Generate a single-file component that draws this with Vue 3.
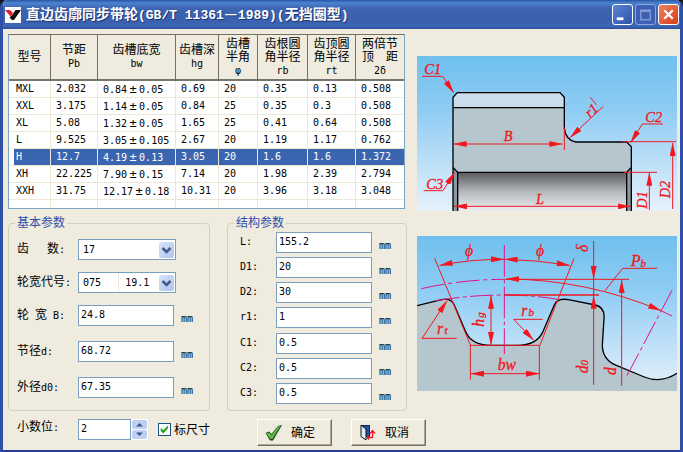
<script setup>
import { h, ref } from 'vue'

// Splits mixed text so that Han characters take two Latin cells.
const Mix = (props) =>
  (props.text.match(/[\u3400-\u9fff]+|±|—|[^\u3400-\u9fff±—]+/g) || []).map((run) => {
    if (run === '±' || run === '—') return h('span', { class: 'wide' }, run)
    return h('span', { class: /[\u3400-\u9fff]/.test(run) ? 'han' : 'latin' }, run)
  })
Mix.props = ['text']

const title = '直边齿廓同步带轮(GB/T 11361—1989)(无挡圈型)'
const columns = [
  ['型号'],
  ['节距', 'Pb'],
  ['齿槽底宽', 'bw'],
  ['齿槽深', 'hg'],
  ['齿槽', '半角', 'φ'],
  ['齿根圆', '角半径', 'rb'],
  ['齿顶圆', '角半径', 'rt'],
  ['两倍节', '顶  距', '2δ'],
]
const rows = [
  ['MXL', '2.032', '0.84±0.05', '0.69', '20', '0.35', '0.13', '0.508'],
  ['XXL', '3.175', '1.14±0.05', '0.84', '25', '0.35', '0.3', '0.508'],
  ['XL', '5.08', '1.32±0.05', '1.65', '25', '0.41', '0.64', '0.508'],
  ['L', '9.525', '3.05±0.105', '2.67', '20', '1.19', '1.17', '0.762'],
  ['H', '12.7', '4.19±0.13', '3.05', '20', '1.6', '1.6', '1.372'],
  ['XH', '22.225', '7.90±0.15', '7.14', '20', '1.98', '2.39', '2.794'],
  ['XXH', '31.75', '12.17±0.18', '10.31', '20', '3.96', '3.18', '3.048'],
]
const selected = ref(4)
const teeth = ref('17')
const code = ref('075')
const basics = ref([
  { id: 'width', label: '轮 宽 B:', value: '24.8' },
  { id: 'pitch', label: '节径d:', value: '68.72' },
  { id: 'outer', label: '外径d0:', value: '67.35' },
])
const structure = ref([
  { id: 'L', value: '155.2' },
  { id: 'D1', value: '20' },
  { id: 'D2', value: '30' },
  { id: 'r1', value: '1' },
  { id: 'C1', value: '0.5' },
  { id: 'C2', value: '0.5' },
  { id: 'C3', value: '0.5' },
])
const decimals = ref(2)
const dimension = ref(true)

// Leaders and dimension lines with an arrow at their end, then with one at both ends.
const sectionArrows = [
  'M36 79H98L131 128',
  'M41 422H99L134 367',
  'M759 222H697L662 278',
  'M580 169L480 263',
  'M718 480V368',
  'M788 477V279',
]
const sectionSpans = ['M131 282H457', 'M133 469H662']
const toothArrows = [
  'M548 33V147',
  'M548 465V197',
  'M632 467V150',
  'M395 268H308L368 331',
  'M137 325H33L108 212',
]
const toothSpans = [
  'M86 106Q175 88 279 88',
  'M281 88Q380 90 476 106',
  'M240 197V345',
  'M180 431H384',
  'M286 147Q525 148 750 242',
]
</script>

<template>
  <main class="window">
    <header class="titlebar">
      <svg class="logo" viewBox="0 0 16 16" aria-hidden="true">
        <rect width="16" height="16" fill="#fff" />
        <path d="M0 3H5L8 6L5.500 9.500Z" fill="#e3202a" />
        <path d="M10.500 3H16L9 13H7L4.500 10.500L7.500 7.500Z" fill="#111" />
      </svg>
      <h1><Mix :text="title" /></h1>
      <div class="controls">
        <button type="button" class="ctl" aria-label="最小化">
          <svg viewBox="0 0 20 20"><rect x="4" y="13" width="7" height="3" fill="#fff" /></svg>
        </button>
        <button type="button" class="ctl off" disabled aria-label="最大化">
          <svg viewBox="0 0 20 20"><path d="M5 5.500H15V15.500H5Z M5 6.500H15" fill="none" stroke="#8199d6" stroke-width="1.500" /></svg>
        </button>
        <button type="button" class="ctl close" aria-label="关闭">
          <svg viewBox="0 0 20 20"><path d="M5.500 5.500L14.500 14.500M14.500 5.500L5.500 14.500" stroke="#fff" stroke-width="2.400" /></svg>
        </button>
      </div>
    </header>

    <div class="content">
      <section class="left">
        <div class="grid-box">
          <table>
            <thead>
              <tr>
                <th v-for="(lines, c) in columns" :key="c" scope="col">
                  <div v-for="line in lines" :key="line" class="hl"><Mix :text="line" /></div>
                </th>
              </tr>
            </thead>
            <tbody>
              <tr v-for="(row, r) in rows" :key="r" :class="{ on: r === selected }" @click="selected = r">
                <td v-for="(cell, c) in row" :key="c"><Mix :text="cell" /></td>
              </tr>
              <tr class="rest"><td v-for="c in 8" :key="c"></td></tr>
            </tbody>
          </table>
        </div>

        <div class="groups">
          <fieldset class="basic">
            <legend><Mix text="基本参数" /></legend>
            <div class="row combo-row">
              <label for="teeth"><Mix text="齿   数:" /></label>
              <span class="combo">
                <select id="teeth" v-model="teeth"><option>17</option><option>18</option></select>
                <span class="drop"><svg viewBox="0 0 15 16"><path d="M3.500 6L7.500 10L11.500 6" /></svg></span>
              </span>
            </div>
            <div class="row combo-row">
              <label for="code"><Mix text="轮宽代号:" /></label>
              <span class="combo split">
                <select id="code" v-model="code"><option value="075">075&nbsp;&nbsp;&nbsp;&nbsp;19.1</option></select>
                <span class="drop"><svg viewBox="0 0 15 16"><path d="M3.500 6L7.500 10L11.500 6" /></svg></span>
              </span>
            </div>
            <div v-for="f in basics" :key="f.id" class="row value-row">
              <label :for="f.id"><Mix :text="f.label" /></label>
              <input :id="f.id" v-model="f.value" type="text" />
              <span class="unit">mm</span>
            </div>
          </fieldset>

          <fieldset class="struct">
            <legend><Mix text="结构参数" /></legend>
            <div v-for="f in structure" :key="f.id" class="row">
              <label :for="f.id"><Mix :text="f.id + ':'" /></label>
              <input :id="f.id" v-model="f.value" type="text" />
              <span class="unit">mm</span>
            </div>
          </fieldset>
        </div>
      </section>

      <section class="drawings">
        <svg class="drawing" viewBox="21 18 780 465" role="img" aria-label="带轮结构">
          <defs>
            <linearGradient id="sky" x1="0" y1="0" x2="0" y2="1">
              <stop offset="0" stop-color="#6fc0ef" /><stop offset="0.350" stop-color="#8fccf3" /><stop offset="1" stop-color="#e6f1fb" />
            </linearGradient>
            <linearGradient id="bore" x1="0" y1="0" x2="0" y2="1">
              <stop offset="0" stop-color="#59595d" /><stop offset="0.500" stop-color="#b4b8bd" /><stop offset="1" stop-color="#eceef0" />
            </linearGradient>
            <marker id="tip" viewBox="0 0 40 18" refX="39" refY="9" markerWidth="40" markerHeight="18" markerUnits="userSpaceOnUse" orient="auto-start-reverse">
              <path d="M0 0L40 9L0 18Z" fill="#f01820" />
            </marker>
          </defs>
          <rect x="21" y="18" width="780" height="465" fill="url(#sky)" />
          <path d="M129 142L142 128H450L463 142V235Q467 270 497 276H650L664 290V352L650 367H142L129 352Z" fill="#b5c6ce" />
          <path d="M129 173V142L142 128H450L463 142V173Z" fill="#cbdcec" />
          <rect x="129" y="367" width="535" height="116" fill="url(#bore)" />
          <path d="M129 352V483H143V367ZM664 352V483H650V367Z" fill="#8d979f" />
          <path class="ink" d="M129 483V142L142 128H450L463 142V235Q467 270 497 276H650L664 290V483M129 173H463M129 352L143 367V483M664 352L650 367V483M143 367H650" />
          <g class="red">
            <path v-for="d in sectionArrows" :key="d" :d="d" marker-end="url(#tip)" />
            <path v-for="d in sectionSpans" :key="d" :d="d" marker-start="url(#tip)" marker-end="url(#tip)" />
            <path d="M463 232V300M637 275H798M642 367H741M541 142L559 164" />
          </g>
          <g class="tag">
            <text x="43" y="73">C1</text><text x="49" y="418">C3</text><text x="706" y="217">C2</text>
            <text x="281" y="273">B</text><text x="378" y="461">L</text>
            <text transform="translate(540 205) rotate(-43)">r1</text>
            <text transform="translate(710 476) rotate(-90)">D1</text>
            <text transform="translate(780 445) rotate(-90)">D2</text>
          </g>
        </svg>

        <svg class="drawing" viewBox="18 18 780 465" role="img" aria-label="齿形参数">
          <rect x="18" y="18" width="780" height="465" fill="url(#sky)" />
          <path d="M18 227L92 209Q122 202 132 230L163 303Q180 346 240 346H320Q375 346 395 307L430 225Q439 203 472 209L553 225Q582 232 579 265L574 345Q574 390 618 407L700 441Q750 461 798 430V483H18Z" fill="#b5c6ce" />
          <path class="ink" d="M18 227L92 209Q122 202 132 230L163 303Q180 346 240 346H320Q375 346 395 307L430 225Q439 203 472 209L553 225Q582 232 579 265L574 345Q574 390 618 407L700 441Q750 461 798 430" />
          <g class="center">
            <path d="M280 45V372" stroke-dasharray="95 10 10 10" />
            <path d="M31 176Q155 148 280 148" stroke-dasharray="70 12 12 12" />
            <path d="M750 242L783 258" />
            <path d="M76 212Q175 195 280 195Q365 195 440 208" stroke-dasharray="70 10 12 10" />
            <path d="M783 181L648 437" stroke-dasharray="75 10 12 10" />
          </g>
          <g class="red">
            <path d="M71 85L178 345M489 85L387 345M178 345V449M385 345V449M178 346H385M280 148H654M582 182L635 115H738M548 147V197" />
            <path class="thick" d="M280 195H564" />
            <path v-for="d in toothArrows" :key="d" :d="d" marker-end="url(#tip)" />
            <path v-for="d in toothSpans" :key="d" :d="d" marker-start="url(#tip)" marker-end="url(#tip)" />
          </g>
          <g class="tag bold">
            <text x="162" y="79">ϕ</text><text x="375" y="79">ϕ</text>
            <text x="660" y="107">P<tspan class="sub" dy="3">b</tspan></text>
            <text x="331" y="257">r<tspan class="sub" dx="3">b</tspan></text>
            <text x="78" y="313">r<tspan class="sub" dx="4">t</tspan></text>
            <text x="260" y="419">bw</text>
            <text transform="translate(220 290) rotate(-90)">h<tspan class="sub" dx="3">g</tspan></text>
            <text transform="translate(531 66) rotate(-90)">δ</text>
            <text transform="translate(530 430) rotate(-90)">d<tspan class="sub">0</tspan></text>
            <text transform="translate(616 435) rotate(-90)">d</text>
          </g>
        </svg>
      </section>

      <div class="footer">
        <label class="places" for="places"><Mix text="小数位:" /></label>
        <input id="places" v-model="decimals" type="text" />
        <span class="spin">
          <button type="button" aria-label="增加" @click="decimals++"><svg viewBox="0 0 15 9"><path d="M4 6.500L7.500 3L11 6.500Z" /></svg></button>
          <button type="button" aria-label="减少" @click="decimals--"><svg viewBox="0 0 15 9"><path d="M4 2.500L7.500 6L11 2.500Z" /></svg></button>
        </span>
        <label class="check"><input v-model="dimension" type="checkbox" /><Mix text="标尺寸" /></label>
        <button type="button" class="push">
          <svg viewBox="0 0 17 17"><path d="M0.500 9L4 7.500L6.500 10L13 2L17 1L8 16.500H5Z" fill="#173d12" /><path d="M1 9.500L4 8.500L6.500 11L13 2.500L15.500 2L7.500 15H5.500Z" fill="#5cb848" /></svg>
          <Mix text="确定" />
        </button>
        <button type="button" class="push">
          <svg viewBox="0 0 17 17"><path d="M2 1H11V13H2Z" fill="#18214f" /><path d="M5 2H10V12H5Z" fill="#2450a8" /><path d="M2 1L7 5V16L2 12.500Z" fill="#d9edf5" stroke="#111" /><path d="M8 13.500H13.500V8M11 9.500L13.500 6.500L16 9.500M8 13.500L10 11.500M8 13.500L10 15.500" fill="none" stroke="#e3202a" stroke-width="1.300" /></svg>
          <Mix text="取消" />
        </button>
      </div>
    </div>
  </main>
</template>

<style>
body {
  margin: 0;
  background: #15151c;
}
.han {
  font-size: 12px;
}
.latin {
  font-size: 10px;
  white-space: pre;
}
.wide {
  display: inline-block;
  width: 12px;
  font-size: 12px;
  line-height: 12px;
  text-align: center;
}
h1 .han {
  font-size: 14px;
}
h1 .latin {
  font-family: "Liberation Mono", monospace;
  font-size: 13px;
}
h1 .wide {
  width: 14px;
  font-family: "Noto Sans CJK SC", sans-serif;
  font-size: 14px;
}
</style>

<style scoped>
.window {
  box-sizing: border-box;
  min-height: 100vh;
  border: solid #2f50a8;
  border-width: 0 3px 3px;
  border-bottom-color: #2b3f98;
  border-radius: 7px 7px 0 0;
  overflow: hidden;
  background: #efebde;
  color: #000;
  font-family: "DejaVu Sans Mono", "Noto Sans CJK SC", monospace;
  font-size: 10px;
  line-height: 12px;
}
button,
input,
select {
  font: inherit;
  color: inherit;
}
.titlebar {
  display: flex;
  align-items: center;
  gap: 5px;
  height: 29px;
  padding: 0 1px 0 2px;
  background: linear-gradient(#2a56a8, #4c83cf 3px, #3d65b2 8px, #3a60ae 22px, #3c68b6 26px, #2c4f9c);
}
.logo {
  width: 16px;
  height: 16px;
}
h1 {
  flex: 1;
  margin: 0;
  color: #fff;
  font-size: 14px;
  line-height: 18px;
  white-space: nowrap;
  text-shadow: 1px 1px 0 #1c3474;
}
.controls {
  display: flex;
  gap: 2px;
}
.ctl {
  box-sizing: border-box;
  width: 21px;
  height: 21px;
  padding: 0;
  border: 1px solid #fff;
  border-radius: 3px;
  background: linear-gradient(135deg, #5d86d4, #2b51ac);
}
.ctl.off {
  border-color: #8ea6dd;
  background: #3c60b4;
}
.ctl.close {
  background: linear-gradient(135deg, #ee8264, #d63c14);
}
.ctl svg {
  display: block;
  width: 100%;
}
.content {
  display: grid;
  grid-template-columns: minmax(0, 399fr) minmax(0, 260fr);
  gap: 8px 10px;
  padding: 5px 3px 4px 5px;
}
.grid-box {
  margin-right: 2px;
  border: 1px solid #7ba3c4;
  border-top-color: #77705f;
  background: #fff;
}
table {
  width: 100%;
  table-layout: fixed;
  border-collapse: separate;
  border-spacing: 0;
}
th,
td {
  box-sizing: border-box;
}
th {
  height: 46px;
  padding: 0;
  border-right: 1px solid #77705f;
  border-bottom: 2px solid #76766c;
  background: #efebde;
  font-weight: 400;
}
th:last-child {
  border-right: 0;
}
th:nth-child(1) { width: 42px; }
th:nth-child(2) { width: 47px; }
th:nth-child(3) { width: 78px; }
th:nth-child(4) { width: 43px; }
th:nth-child(5) { width: 39px; }
th:nth-child(6) { width: 50px; }
th:nth-child(7) { width: 48px; }
th:nth-child(8) { width: 48px; }
.hl {
  height: 13px;
  line-height: 13px;
}
td {
  height: 17px;
  padding: 0 0 0 5px;
  border-right: 1px solid #ece8d8;
  border-bottom: 1px solid #ece8d8;
  line-height: 12px;
  white-space: nowrap;
}
td:first-child {
  padding-left: 7px;
}
td:last-child {
  border-right: 0;
}
.on td {
  background: #3b65b1;
  color: #fff;
}
.on td:first-child {
  background: linear-gradient(90deg, #fff 5px, #3b65b1 5px);
}
.rest td {
  height: 8px;
  border-bottom: 0;
}
.groups {
  display: grid;
  grid-template-columns: minmax(0, 202fr) minmax(0, 180fr);
  gap: 17px;
  margin-top: 8px;
}
fieldset {
  box-sizing: border-box;
  min-width: 0;
  margin: 0;
  border: 1px solid #d2cfbc;
  border-radius: 4px;
}
.basic {
  padding: 9px 8px 0;
}
.struct {
  display: grid;
  gap: 4px;
  padding: 2px 12px 6px;
}
legend {
  margin-left: -2px;
  padding: 0 2px;
  color: #2f50a8;
  line-height: 12px;
}
.struct legend {
  margin-left: -6px;
}
.row {
  display: grid;
  grid-template-columns: 61px minmax(0, 96px) 1fr;
  align-items: start;
}
.struct .row {
  grid-template-columns: 36px minmax(0, 96px) 1fr;
}
.combo-row {
  grid-template-columns: 61px minmax(0, 98px);
  min-height: 33px;
}
.value-row {
  min-height: 36px;
}
.value-row:last-child {
  min-height: 33px;
}
.row label {
  padding-top: 4px;
  white-space: nowrap;
}
.unit {
  padding: 8px 0 0 7px;
}
input[type='text'],
select {
  box-sizing: border-box;
  width: 100%;
  min-width: 0;
  height: 21px;
  padding: 0 2px 2px;
  border: 1px solid #7b9ebd;
  border-radius: 0;
  background: #fff;
  outline: 0;
}
.combo {
  display: grid;
  align-items: center;
}
.combo select,
.drop {
  grid-area: 1 / 1;
}
select {
  appearance: none;
  padding: 0 18px 0 4px;
}
.split select {
  background: linear-gradient(90deg, transparent 39px, #f0e6e0 39px, #f0e6e0 40px, transparent 40px) #fff;
}
.drop {
  justify-self: end;
  width: 15px;
  height: 16px;
  margin-right: 2px;
  border-radius: 2px;
  background: linear-gradient(135deg, #d6e3fb, #aec4ee);
  pointer-events: none;
}
.drop svg {
  display: block;
  fill: none;
  stroke: #44598c;
  stroke-width: 2.5;
}
.footer {
  grid-column: 1 / -1;
  display: flex;
  align-items: flex-start;
  padding-left: 9px;
}
.places {
  flex: 0 0 61px;
  padding-top: 2px;
}
.footer input[type='text'] {
  width: 53px;
}
.spin {
  display: grid;
  gap: 1px;
  width: 17px;
  padding: 1px;
  box-sizing: border-box;
  background: #fff;
}
.spin button {
  height: 9px;
  padding: 0;
  border: 0;
  border-radius: 2px;
  background: #bed0f2;
}
.spin svg {
  display: block;
  fill: #44598c;
}
.check {
  display: flex;
  gap: 3px;
  align-items: center;
  width: 99px;
  height: 21px;
  margin-left: 10px;
  box-sizing: border-box;
}
.check input {
  appearance: none;
  box-sizing: border-box;
  width: 13px;
  height: 13px;
  margin: 0;
  border: 1px solid #1c5180;
  background: #fff;
}
.check input:checked::after {
  content: '';
  display: block;
  width: 9px;
  height: 9px;
  margin: 1px;
  background: #21a121;
  clip-path: polygon(8% 30%, 36% 58%, 88% 5%, 88% 40%, 36% 95%, 8% 66%);
}
.push {
  display: flex;
  align-items: center;
  gap: 9px;
  box-sizing: border-box;
  width: 75px;
  height: 27px;
  padding: 0 0 0 7px;
  border: 1px solid;
  border-color: #fff #77705f #77705f #fff;
  background: #efebde;
  box-shadow: inset -1px -1px 0 #aca899;
}
.push + .push {
  margin-left: 19px;
}
.push svg {
  width: 17px;
  height: 17px;
}
.drawings {
  display: flex;
  flex-direction: column;
  gap: 25px;
  padding-top: 22px;
}
.drawing {
  display: block;
  width: 100%;
  height: auto;
}
.ink {
  fill: none;
  stroke: #000;
  stroke-width: 4;
}
.red {
  fill: none;
  stroke: #f01820;
  stroke-width: 3;
}
.thick {
  stroke-width: 5;
}
.center {
  fill: none;
  stroke: #e0128a;
  stroke-width: 3;
}
.tag {
  fill: #f01820;
  font: italic 43px "Liberation Serif", serif;
}
.tag text {
  stroke: #f01820;
  stroke-width: 1;
}
.bold {
  font-size: 47px;
}
.sub {
  font-size: 33px;
}
</style>
